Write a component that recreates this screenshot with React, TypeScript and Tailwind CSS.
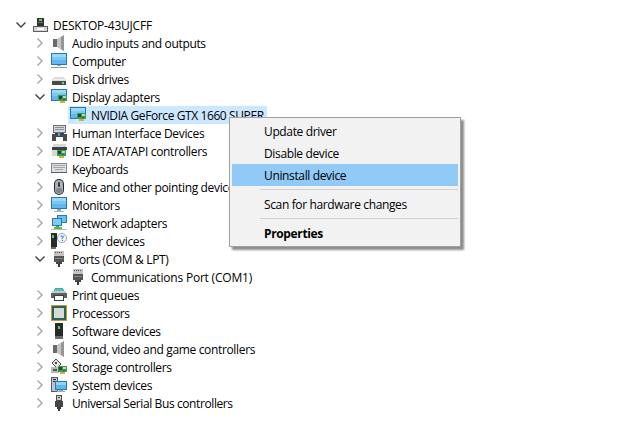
import React from 'react';

type IconName =
  | 'pc' | 'audio' | 'computer' | 'disk' | 'display' | 'hid' | 'ide' | 'keyboard' | 'mouse' | 'monitor'
  | 'network' | 'other' | 'port' | 'print' | 'cpu' | 'software' | 'storage' | 'system' | 'usb';

function Card({ x, y }: { x: number; y: number }) {
  return (
    <g transform={`translate(${x} ${y})`}>
      <rect x="0" y="0" width="9" height="6" fill="#3f9a5a" />
      <rect x="1" y="1" width="3" height="3" fill="#174f30" />
      <rect x="5" y="1" width="3" height="2" fill="#b5dcae" />
      <rect x="5" y="4" width="2" height="1" fill="#1e6b3e" />
      <rect x="2" y="6" width="5" height="2" fill="#e8a63a" />
    </g>
  );
}

function Screen({ base }: { base?: boolean }) {
  return (
    <>
      <rect x="0.5" y="0.5" width="15" height="11" fill="#62b8ee" stroke="#2a78b0" />
      <rect x="1" y="1" width="14" height="3" fill="#9ad8f8" />
      <rect x="1" y="4" width="14" height="3" fill="#7cc8f4" />
      {base && (
        <>
          <rect x="6" y="12" width="4" height="2" fill="#9aa5ad" />
          <rect x="3" y="14" width="10" height="1" fill="#a9b3ba" />
        </>
      )}
    </>
  );
}

function DeviceIcon({ name }: { name: IconName }) {
  return (
    <svg width="16" height="16" viewBox="0 0 16 16" shapeRendering="crispEdges" className="shrink-0">
      {name === 'pc' && (
        <>
          <rect x="5" y="1" width="7" height="8" fill="#333333" />
          <rect x="7" y="2" width="3" height="2" fill="#4fd16c" />
          <rect x="6" y="5" width="5" height="1" fill="#777777" />
          <rect x="1.5" y="9.5" width="14" height="5" fill="#d5d5d5" stroke="#5f5f5f" />
          <rect x="5" y="11" width="7" height="2" fill="#ffffff" />
        </>
      )}
      {name === 'audio' && (
        <>
          <rect x="2" y="4" width="4" height="8" fill="#6a6a6a" />
          <path d="M6 4 L13 0 V16 L6 12 Z" fill="#c4c4c4" shapeRendering="auto" />
          <path d="M10 2 L13 0 V16 L10 14 Z" fill="#959595" shapeRendering="auto" />
        </>
      )}
      {name === 'computer' && (
        <>
          <Screen />
          <rect x="6" y="12" width="4" height="1" fill="#9aa5ad" />
          <rect x="0" y="14" width="16" height="1" fill="#8f9aa2" />
        </>
      )}
      {name === 'monitor' && <Screen base />}
      {name === 'disk' && (
        <>
          <path d="M3 6 H13 L15 9 V14 H1 V9 Z" fill="#dcdcdc" />
          <rect x="2" y="8" width="12" height="1" fill="#efefef" />
          <rect x="1" y="10" width="14" height="4" fill="#4a4a4a" />
          <rect x="11" y="11" width="2" height="2" fill="#5fe07f" />
        </>
      )}
      {name === 'display' && (
        <>
          <Screen />
          <Card x={7} y={6} />
        </>
      )}
      {name === 'hid' && (
        <>
          <rect x="2.5" y="0.5" width="12" height="7" fill="#d4d7db" stroke="#6c7075" />
          <rect x="4" y="2" width="9" height="1" fill="#8a8e93" />
          <rect x="4" y="4" width="9" height="1" fill="#8a8e93" />
          <rect x="4" y="8" width="9" height="4" fill="#3f4347" />
          <rect x="1" y="9" width="4" height="7" fill="#4a4a4a" />
          <rect x="12" y="9" width="4" height="7" fill="#4a4a4a" />
          <rect x="7" y="8" width="2" height="3" fill="#4aa3e0" />
        </>
      )}
      {name === 'ide' && (
        <>
          <rect x="2" y="1" width="13" height="3" fill="#d8d8d8" />
          <rect x="1" y="4" width="15" height="3" fill="#3f3f3f" />
          <rect x="1" y="7" width="6" height="6" fill="#d8d8d8" />
          <Card x={6} y={7} />
        </>
      )}
      {name === 'keyboard' && (
        <>
          <rect x="0.5" y="2.5" width="15" height="9" fill="#dcdee2" stroke="#85898f" />
          <rect x="2" y="4" width="12" height="1" fill="#a5a9ae" />
          <rect x="2" y="6" width="12" height="1" fill="#a5a9ae" />
          <rect x="4" y="8" width="8" height="1" fill="#a5a9ae" />
          <rect x="0" y="11" width="16" height="1" fill="#5c6066" />
        </>
      )}
      {name === 'mouse' && (
        <g shapeRendering="auto">
          <rect x="3" y="0" width="10" height="16" rx="5" fill="#23272c" />
          <rect x="4" y="1" width="8" height="14" rx="4" fill="#aab0b6" />
          <rect x="5" y="9" width="6" height="5" rx="2" fill="#7f868d" />
          <rect x="7" y="3" width="2" height="5" rx="1" fill="#343a40" />
        </g>
      )}
      {name === 'network' && (
        <>
          <rect x="6.5" y="0.5" width="9" height="7" fill="#6cc1f2" stroke="#2a78b0" />
          <rect x="1.5" y="3.5" width="9" height="7" fill="#7ecbf5" stroke="#2a78b0" />
          <rect x="0" y="14" width="16" height="1" fill="#b9bec3" />
          <rect x="5" y="11" width="3" height="1" fill="#3fb04f" />
          <rect x="3" y="12" width="8" height="2" fill="#4fc04f" />
        </>
      )}
      {name === 'other' && (
        <>
          <rect x="0" y="0" width="6" height="14" fill="#2a2a2a" />
          <rect x="1" y="2" width="2" height="3" fill="#4fd16c" />
          <rect x="0" y="14" width="5" height="2" fill="#6a6a6a" />
          <circle cx="11" cy="5" r="4.5" fill="#f4f8fb" stroke="#8fa5b5" shapeRendering="auto" />
          <path d="M9.5 3.6 Q11 2.2 12.4 3.6 Q12.4 4.8 11 5.5 V6.3" fill="none" stroke="#2b6fb5" strokeWidth="1" shapeRendering="auto" />
          <rect x="10.5" y="7" width="1" height="1" fill="#2b6fb5" />
        </>
      )}
      {name === 'port' && (
        <>
          <rect x="3" y="0" width="10" height="5" fill="#c4c4c4" />
          <rect x="4" y="1" width="1" height="1" fill="#4f4f4f" />
          <rect x="6" y="1" width="1" height="1" fill="#4f4f4f" />
          <rect x="8" y="1" width="1" height="1" fill="#4f4f4f" />
          <rect x="10" y="1" width="1" height="1" fill="#4f4f4f" />
          <rect x="3" y="5" width="10" height="6" fill="#565656" />
          <rect x="4" y="7" width="8" height="1" fill="#8a8a8a" />
          <rect x="5" y="11" width="6" height="2" fill="#454545" />
          <rect x="7" y="13" width="2" height="3" fill="#3a3a3a" />
        </>
      )}
      {name === 'print' && (
        <>
          <rect x="4" y="1" width="8" height="1" fill="#3aa0e0" />
          <rect x="3" y="2" width="10" height="2" fill="#52c4a0" />
          <rect x="1" y="4" width="14" height="2" fill="#c4c8cc" />
          <rect x="0" y="6" width="16" height="5" fill="#5e6266" />
          <rect x="3.5" y="8.5" width="9" height="5" fill="#ffffff" stroke="#3c3c3c" />
        </>
      )}
      {name === 'cpu' && (
        <>
          <rect x="0" y="0" width="16" height="16" fill="#c29a4a" />
          <rect x="1" y="1" width="14" height="14" fill="#2d6350" />
          <rect x="3" y="3" width="10" height="10" fill="#d8dad8" />
        </>
      )}
      {name === 'software' && (
        <>
          <rect x="4" y="0" width="8" height="13" fill="#2a2a2a" />
          <rect x="7" y="3" width="2" height="3" fill="#4fd16c" />
          <rect x="4" y="13" width="8" height="3" fill="#6a6a6a" />
        </>
      )}
      {name === 'storage' && (
        <>
          <path d="M1 4 L5 0 L10 5 L6 9 Z" fill="#e4e4e4" stroke="#4c4c4c" shapeRendering="auto" />
          <rect x="4" y="3" width="2" height="2" fill="#4c4c4c" />
          <rect x="0" y="8" width="8" height="6" fill="#b8b8b8" />
          <rect x="2" y="10" width="4" height="2" fill="#555555" />
          <Card x={7} y={7} />
        </>
      )}
      {name === 'system' && (
        <>
          <rect x="0.5" y="0.5" width="6" height="14" fill="#c0c4c8" stroke="#5c5c5c" />
          <rect x="2" y="2" width="3" height="1" fill="#2f2f2f" />
          <rect x="2" y="4" width="3" height="1" fill="#2f2f2f" />
          <rect x="4.5" y="4.5" width="11" height="8" fill="#5bb7ee" stroke="#2a78b0" />
          <rect x="5" y="5" width="10" height="3" fill="#8fd3f7" />
          <rect x="8" y="13" width="4" height="1" fill="#9aa5ad" />
          <rect x="6" y="14" width="8" height="1" fill="#9aa5ad" />
        </>
      )}
      {name === 'usb' && (
        <>
          <rect x="5.5" y="0.5" width="5" height="5" fill="#c9c9c9" stroke="#4c4c4c" />
          <rect x="7" y="2" width="2" height="1" fill="#4c4c4c" />
          <rect x="4" y="6" width="8" height="6" fill="#454545" />
          <rect x="6" y="12" width="4" height="2" fill="#3a3a3a" />
          <rect x="7" y="14" width="2" height="2" fill="#3a3a3a" />
        </>
      )}
    </svg>
  );
}

function Chevron({ open }: { open?: boolean }) {
  return (
    <svg width="12" height="12" viewBox="0 0 12 12" fill="none" className="shrink-0">
      {open ? (
        <path d="M1.5 3.5 L6 8 L10.5 3.5" stroke="#404040" strokeWidth="1.4" />
      ) : (
        <path d="M3.5 1.5 L8 6 L3.5 10.5" stroke="#a6a6a6" strokeWidth="1.4" />
      )}
    </svg>
  );
}

const rows: { label: string; icon: IconName; level: number; open?: boolean; selected?: boolean; leaf?: boolean; track?: string }[] = [
  { label: 'DESKTOP-43UJCFF', icon: 'pc', level: 0, open: true, track: 'tracking-[-0.2px]' },
  { label: 'Audio inputs and outputs', icon: 'audio', level: 1 },
  { label: 'Computer', icon: 'computer', level: 1 },
  { label: 'Disk drives', icon: 'disk', level: 1 },
  { label: 'Display adapters', icon: 'display', level: 1, open: true },
  { label: 'NVIDIA GeForce GTX 1660 SUPER', icon: 'display', level: 2, selected: true, leaf: true, track: 'tracking-[-0.4px]' },
  { label: 'Human Interface Devices', icon: 'hid', level: 1 },
  { label: 'IDE ATA/ATAPI controllers', icon: 'ide', level: 1 },
  { label: 'Keyboards', icon: 'keyboard', level: 1 },
  { label: 'Mice and other pointing devices', icon: 'mouse', level: 1 },
  { label: 'Monitors', icon: 'monitor', level: 1 },
  { label: 'Network adapters', icon: 'network', level: 1 },
  { label: 'Other devices', icon: 'other', level: 1 },
  { label: 'Ports (COM & LPT)', icon: 'port', level: 1, open: true },
  { label: 'Communications Port (COM1)', icon: 'port', level: 2, leaf: true, track: 'tracking-[-0.2px]' },
  { label: 'Print queues', icon: 'print', level: 1 },
  { label: 'Processors', icon: 'cpu', level: 1 },
  { label: 'Software devices', icon: 'software', level: 1 },
  { label: 'Sound, video and game controllers', icon: 'audio', level: 1 },
  { label: 'Storage controllers', icon: 'storage', level: 1 },
  { label: 'System devices', icon: 'system', level: 1 },
  { label: 'Universal Serial Bus controllers', icon: 'usb', level: 1, track: 'tracking-[-0.4px]' },
];

const indent = ['pl-[15px]', 'pl-[34px]', 'pl-[53px]'];

export default function App() {
  return (
    <div className="relative w-[641px] h-[429px] overflow-hidden bg-white pt-[16px] text-[12px] text-black font-['Open_Sans',sans-serif]">
      {rows.map((r) => (
        <div key={r.label} className={`flex items-center h-[18px] whitespace-nowrap ${indent[r.level]}`}>
          <div className="w-[12px] flex justify-center shrink-0">{!r.leaf && <Chevron open={r.open} />}</div>
          <div className={`flex items-center h-[18px] ml-[3px] pl-[2px] pr-[3px] gap-[5px] ${r.selected ? 'bg-[#cce8ff]' : ''}`}>
            <DeviceIcon name={r.icon} />
            <span className={`pt-[1px] ${r.track ?? 'tracking-[-0.34px]'}`}>{r.label}</span>
          </div>
        </div>
      ))}

      <div className="absolute left-[229px] top-[117px] w-[232px] h-[130px] bg-[#f2f2f2] border border-[#a0a0a0] shadow-[3px_3px_2px_rgba(0,0,0,0.45)] p-[2px] tracking-[-0.36px]">
        <div className="h-[22px] flex items-center pl-[32px] pt-[1px]">Update driver</div>
        <div className="h-[22px] flex items-center pl-[32px] pt-[1px]">Disable device</div>
        <div className="h-[22px] flex items-center pl-[32px] pt-[1px] bg-[#91c9f7]">Uninstall device</div>
        <div className="h-px bg-[#d0d0d0] ml-[28px] mt-[3px]" />
        <div className="h-[22px] mt-[3px] flex items-center pl-[32px] pt-[1px]">Scan for hardware changes</div>
        <div className="h-px bg-[#d0d0d0] ml-[28px] mt-[3px]" />
        <div className="h-[22px] mt-[3px] flex items-center pl-[32px] pt-[1px] font-bold">Properties</div>
      </div>
    </div>
  );
}
